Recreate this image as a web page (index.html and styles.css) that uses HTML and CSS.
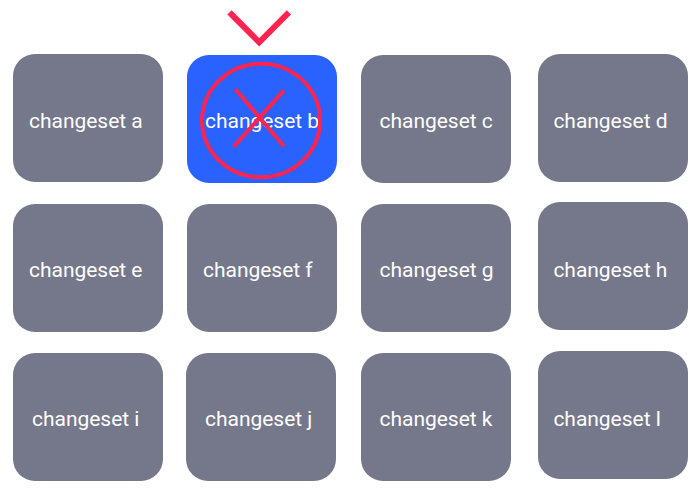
FILE: index.html
```html
<!DOCTYPE html>
<html lang="en">
<head>
<meta charset="utf-8">
<title>Changesets</title>
<link rel="stylesheet" href="styles.css">
</head>
<body>
<main class="board">
  <div class="column col-1">
    <div class="card low"><span>changeset a</span></div>
    <div class="card"><span>changeset e</span></div>
    <div class="card inset"><span>changeset i</span></div>
  </div>
  <div class="column col-2">
    <div class="card active"><span>changeset b</span></div>
    <div class="card"><span>changeset f</span></div>
    <div class="card shifted"><span>changeset j</span></div>
  </div>
  <div class="column col-3">
    <div class="card"><span>changeset c</span></div>
    <div class="card"><span>changeset g</span></div>
    <div class="card"><span>changeset k</span></div>
  </div>
  <div class="column col-4">
    <div class="card low"><span>changeset d</span></div>
    <div class="card lower"><span>changeset h</span></div>
    <div class="card lower"><span>changeset l</span></div>
  </div>
  <svg class="marks" viewBox="0 0 140 190" aria-hidden="true">
    <path d="M39.500 12.300 69.200 42.300 98.900 12.300" stroke-width="6"/>
    <ellipse cx="71" cy="120.500" rx="59" ry="56.700" stroke-width="4"/>
    <path d="M45.200 89 93.900 146.200M93.900 90.300 43.700 146.700" stroke-width="4"/>
  </svg>
</main>
</body>
</html>
```
FILE: styles.css
```css
body {
  margin: 0;
  background: #fff;
  font-family: Roboto, sans-serif;
}

.board {
  position: relative;
  display: flex;
  box-sizing: border-box;
  width: 698px;
  height: 497px;
  padding-left: 13px;
  overflow: hidden;
}

.column {
  display: flex;
  flex: none;
  flex-direction: column;
  gap: 21px;
  width: 150px;
}

.col-1 { padding-top: 54px; }
.col-1 .low { margin-bottom: 1px; }
.col-2 { margin-left: 24px; padding-top: 55px; }
.col-3 { margin-left: 24px; padding-top: 55px; }
.col-4 { margin-left: 27px; padding-top: 54px; gap: 20px; }
.col-4 .card:last-child { margin-top: 1px; }

.card {
  display: flex;
  align-items: center;
  box-sizing: border-box;
  width: 150px;
  height: 128px;
  padding: 4px 0 0 16px;
  border-radius: 22px;
  background: #75788b;
  color: #fff;
  font-size: 21px;
  letter-spacing: -0.03px;
  line-height: 26px;
  white-space: nowrap;
}

.low { padding-top: 6px; }
.lower { padding-top: 8px; }
.active { background: #2962ff; padding-left: 18px; }
.col-3 .card { padding-left: 18.5px; }
.col-4 .card { padding-left: 15.4px; }
.inset { padding-left: 19px; }
.shifted { margin-left: -1px; padding-left: 19px; }

.marks {
  position: absolute;
  left: 190px;
  top: 0;
  width: 140px;
  height: 190px;
  fill: none;
  stroke: #ff234f;
}
```
